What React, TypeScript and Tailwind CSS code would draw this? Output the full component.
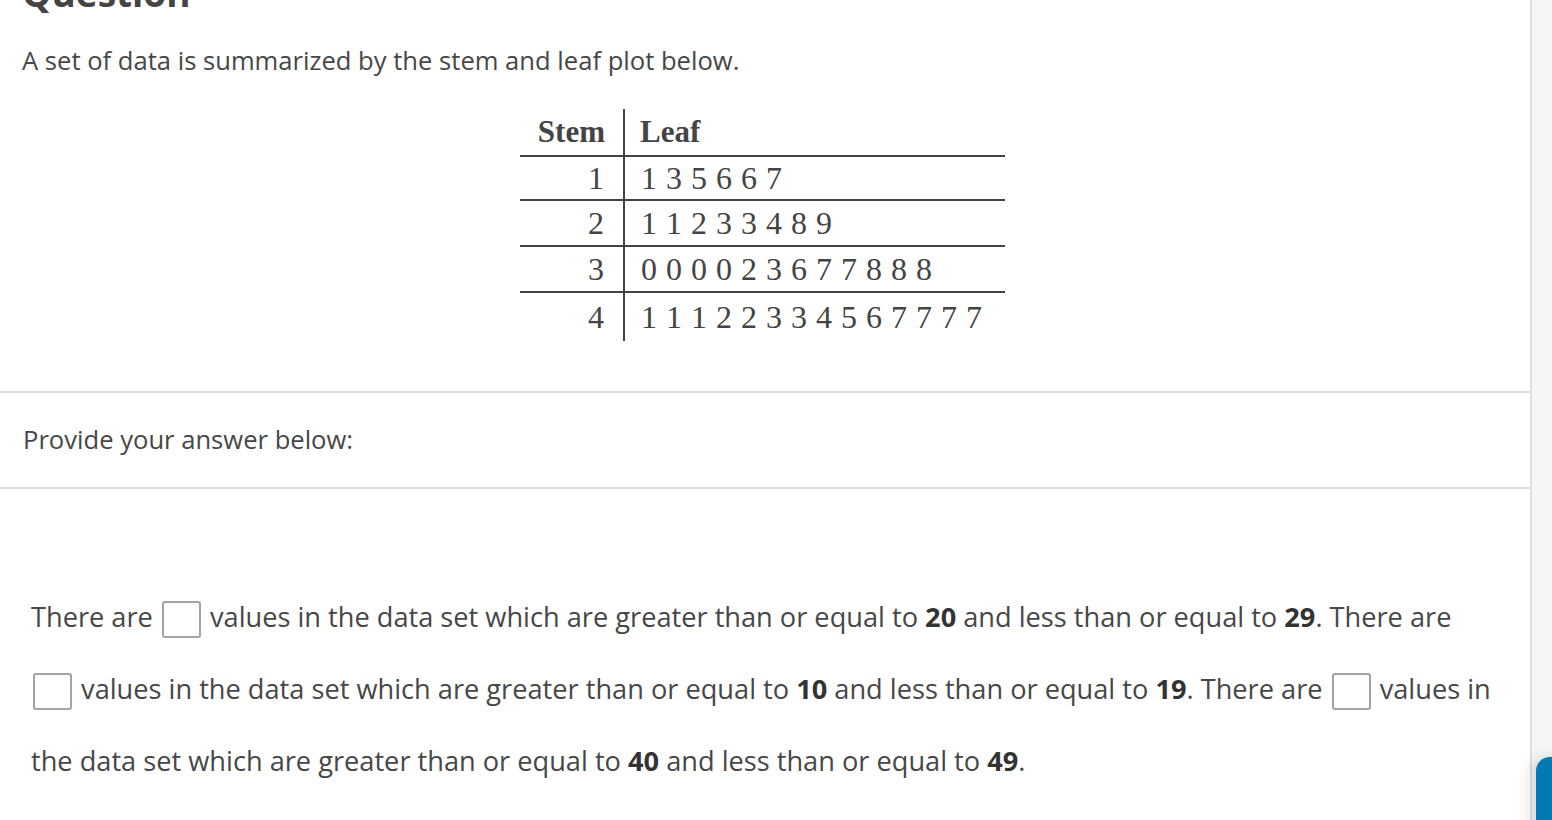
import React from 'react';

const stemRows = [
  { stem: '1', leaf: '1 3 5 6 6 7', h: 'h-[44px]' },
  { stem: '2', leaf: '1 1 2 3 3 4 8 9', h: 'h-[46px]' },
  { stem: '3', leaf: '0 0 0 0 2 3 6 7 7 8 8 8', h: 'h-[46px]' },
  { stem: '4', leaf: '1 1 1 2 2 3 3 4 5 6 7 7 7 7', h: 'h-[48px]' },
];

function Blank() {
  return (
    <input
      type="text"
      aria-label="answer"
      className="inline-block w-[39px] h-[37px] mx-[2px] align-middle border-2 border-[#a3a3a3] rounded-[3px] bg-white outline-none"
    />
  );
}

export default function App() {
  return (
    <div className="flex h-[820px] overflow-hidden bg-white text-[#474747]" style={{ fontFamily: '"Open Sans", sans-serif' }}>
      {/* Main question column */}
      <div className="w-[1532px] shrink-0 border-r-2 border-[#e0e0e0] bg-white">
        <div className="pl-[22px] pb-[50px]">
          <h1 className="-mt-[29px] text-[37px] leading-[44px] font-bold text-[#444]">Question</h1>
          <p className="mt-[29px] text-[25.6px] leading-[34px]">A set of data is summarized by the stem and leaf plot below.</p>

          {/* Stem and leaf plot */}
          <div className="ml-[498px] mt-[31px] w-[485px] text-[#444]" style={{ fontFamily: '"Liberation Serif", serif' }}>
            <div className="flex h-[48px] items-center border-b-2 border-[#444]">
              <div className="w-[103px] h-full pr-[18px] flex items-center justify-end text-[31px] font-bold">Stem</div>
              <div className="flex-1 h-full border-l-2 border-[#444] pl-[15px] flex items-center text-[31px] font-bold">Leaf</div>
            </div>
            {stemRows.map((r, i) => (
              <div
                key={r.stem}
                className={`flex ${r.h} items-center ${i < stemRows.length - 1 ? 'border-b-2 border-[#444]' : ''}`}
              >
                <div className="w-[103px] h-full pr-[19px] flex items-center justify-end text-[32px]">{r.stem}</div>
                <div className="flex-1 h-full border-l-2 border-[#444] pl-[16px] flex items-center text-[32px] [word-spacing:1px]">
                  {r.leaf}
                </div>
              </div>
            ))}
          </div>
        </div>

        <div className="border-t-2 border-[#dedede] h-[96px] flex items-center pl-[23px]">
          <p className="text-[25.6px] leading-[34px]">Provide your answer below:</p>
        </div>

        <div className="border-t-2 border-[#dedede] pt-[92px] pl-[31px] pr-[38px]">
          <p className="text-[27.2px] leading-[72px]">
            There are <Blank /> values in the data set which are greater than or equal to <b className="font-bold text-[#333]">20</b> and less than or equal to <b className="font-bold text-[#333]">29</b>. There are <Blank /> values in the data set which are greater than or equal to <b className="font-bold text-[#333]">10</b> and less than or equal to <b className="font-bold text-[#333]">19</b>. There are <Blank /> values in the data set which are greater than or equal to <b className="font-bold text-[#333]">40</b> and less than or equal to <b className="font-bold text-[#333]">49</b>.
          </p>
        </div>
      </div>

      {/* Side rail */}
      <div className="relative flex-1 bg-[#f6f6f6]">
        <div className="absolute left-[4px] top-[757px] w-[60px] h-[120px] rounded-tl-[14px] bg-[#0079b5] shadow-[-6px_0_14px_rgba(0,0,0,0.12)]" />
      </div>
    </div>
  );
}
